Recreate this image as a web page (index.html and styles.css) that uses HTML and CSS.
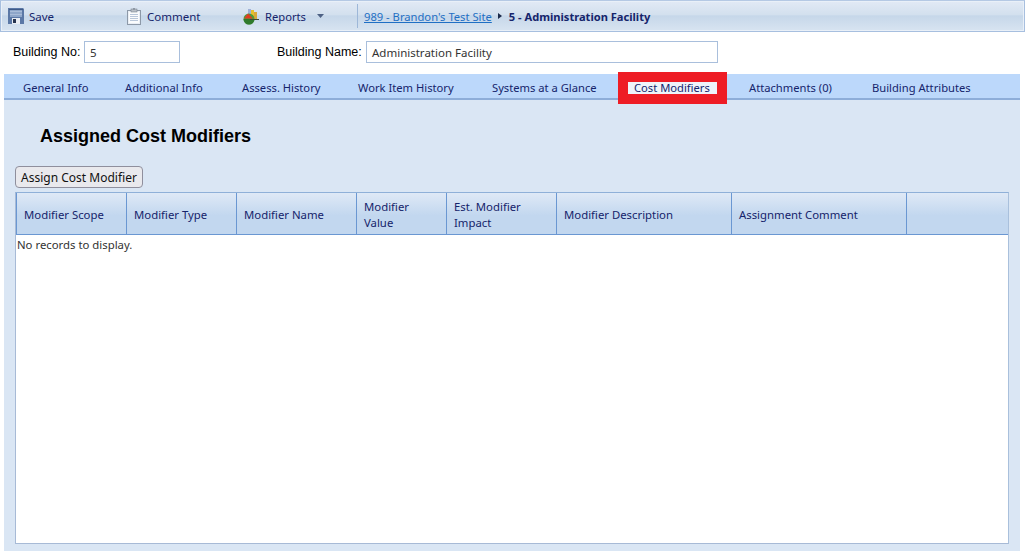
FILE: index.html
```
<!DOCTYPE html>
<html lang="en">
<head>
<meta charset="utf-8">
<title>Administration Facility</title>
<link rel="stylesheet" href="styles.css">
</head>
<body>
<div class="toolbar">
  <div class="tool tool-save">
    <svg class="icon" width="16" height="16" viewBox="0 0 16 16"><path d="M0 0h15l1 1v15H0z" fill="#5b78a6"/><rect x="1" y="1" width="14" height="1" fill="#3f5a88"/><rect x="2" y="2" width="12" height="7" fill="#8ea6c9"/><rect x="2" y="3" width="12" height="1" fill="#a9bcd8"/><rect x="2" y="6" width="12" height="1" fill="#a9bcd8"/><rect x="4" y="10" width="8" height="6" fill="#e9edf3"/><rect x="5" y="11" width="3" height="4" fill="#26344f"/></svg>
    <span>Save</span>
  </div>
  <div class="tool tool-comment">
    <svg class="icon" width="14" height="17" viewBox="0 0 14 17"><rect x="0.5" y="2.5" width="13" height="14" fill="#e9eef5" stroke="#8d99a8"/><rect x="2" y="4" width="10" height="11" fill="#fbfcfd"/><path d="M3 6.500h8M3 8.500h8M3 10.500h8M3 12.500h8" stroke="#b9c7da"/><rect x="4" y="1" width="6" height="3" fill="#b8bec6" stroke="#7b8592" stroke-width=".6"/><rect x="6" y="0" width="2" height="2" fill="#8f98a4"/></svg>
    <span>Comment</span>
  </div>
  <div class="tool tool-reports">
    <svg class="icon" width="17" height="17" viewBox="0 0 17 17"><rect x="5" y="1" width="3" height="8" fill="#9fb0d8"/><rect x="8" y="2" width="3" height="8" fill="#e8c02c"/><rect x="11" y="4" width="3" height="7" fill="#d9a83a"/><circle cx="6" cy="11" r="5.500" fill="#4f9a3b"/><path d="M.5 11h11a5.500 5.500 0 0 1-11 0z" fill="#2f7a2c"/><path d="M1 10.500l4-5 5 5z" fill="#e23b22"/><path d="M7 11.500h9" stroke="#3d4a3a"/></svg>
    <span>Reports</span>
    <svg class="caret" width="7" height="4" viewBox="0 0 7 4"><path d="M0 0h7L3.500 4z" fill="#4d6184"/></svg>
  </div>
  <div class="crumbs">
    <a class="crumb-link" href="#">989 - Brandon's Test Site</a>
    <span class="crumb-arrow"></span>
    <span class="crumb-current">5 - Administration Facility</span>
  </div>
</div>

<div class="form-row">
  <label class="field-label label-no">Building No:</label>
  <div class="field field-no">5</div>
  <label class="field-label label-name">Building Name:</label>
  <div class="field field-name">Administration Facility</div>
</div>

<div class="tabs">
  <div class="tab">General Info</div>
  <div class="tab">Additional Info</div>
  <div class="tab">Assess. History</div>
  <div class="tab">Work Item History</div>
  <div class="tab">Systems at a Glance</div>
  <div class="tab tab-current"><span class="tab-active">Cost Modifiers</span></div>
  <div class="tab">Attachments (0)</div>
  <div class="tab">Building Attributes</div>
</div>

<main class="panel">
  <h1 class="title">Assigned Cost Modifiers</h1>
  <button class="btn" type="button">Assign Cost Modifier</button>
  <div class="grid">
    <div class="grid-head">
      <div class="th">Modifier Scope</div>
      <div class="th">Modifier Type</div>
      <div class="th">Modifier Name</div>
      <div class="th">Modifier<br>Value</div>
      <div class="th">Est. Modifier<br>Impact</div>
      <div class="th">Modifier Description</div>
      <div class="th">Assignment Comment</div>
      <div class="th th-last"></div>
    </div>
    <div class="grid-body">No records to display.</div>
  </div>
</main>
</body>
</html>
```
FILE: styles.css
```
* { box-sizing: border-box; }
html, body { height: 100%; }
body {
  margin: 0;
  width: 1025px;
  height: 551px;
  overflow: hidden;
  background: #fff;
  font-family: "Noto Sans", "Open Sans", sans-serif;
  font-size: 11.5px;
  color: #15246b;
  display: flex;
  flex-direction: column;
}
.toolbar {
  height: 32px;
  flex: none;
  display: flex;
  align-items: center;
  border: 1px solid #a7bfdf;
  border-top-color: #b5c9e4;
  box-shadow: inset 0 0 0 1px #e9f0f8;
  background: linear-gradient(#e2eaf5 0, #d3e0ee 45%, #c6d7e9 50%, #d8e4f1 100%);
  padding-left: 7px;
  color: #15246b;
}
.tool { display: flex; align-items: center; }
.tool-save { width: 119px; gap: 5px; }
.tool-comment { width: 116px; gap: 6px; }
.tool-reports { width: 114px; gap: 5px; font-size: 11.2px; }
.caret { margin-left: 6px; }
.icon { flex: none; }
.crumbs {
  height: 24px;
  border-left: 1px solid #9db7d8;
  padding-left: 6px;
  display: flex;
  align-items: center;
  gap: 6px;
  font-size: 11.2px;
}
.crumb-link { color: #1f6fc4; text-decoration: underline; }
.crumb-arrow {
  width: 0;
  height: 0;
  margin-right: 1px;
  border-left: 4px solid #1b2a4a;
  border-top: 3px solid transparent;
  border-bottom: 3px solid transparent;
}
.crumb-current { font-weight: 700; font-size: 11.1px; color: #15246b; }
.form-row {
  height: 42px;
  flex: none;
  display: flex;
  align-items: center;
  padding: 0 0 2px 13px;
}
.field-label {
  font-family: "Liberation Sans", Arial, sans-serif;
  font-size: 12.5px;
  color: #000;
}
.label-no { width: 71px; }
.label-name { width: 89px; }
.field {
  height: 22px;
  border: 1px solid #a9bfdc;
  background: #fff;
  color: #333;
  padding: 3px 5px 0;
  line-height: 16px;
}
.field-no { width: 96px; margin-right: 97px; }
.field-name { width: 352px; }
.tabs {
  height: 26px;
  flex: none;
  margin: 0 5px 0 4px;
  display: grid;
  grid-template-columns: 102px 117px 116px 134px 142px 115px 123px 1fr;
  align-items: center;
  background: #bcd8fb;
  border-bottom: 2px solid #8dadd9;
  padding-top: 4px;
  font-size: 11.2px;
}
.tab { padding: 0 0 0 19px; color: #15246b; white-space: nowrap; line-height: 14px; }
.tab-current { padding-left: 13px; }
.tab-active {
  display: block;
  width: 89px;
  height: 12px;
  line-height: 12px;
  padding: 0 6px;
  background: #eef3fa;
  box-shadow: 0 0 0 10px #ee1c25;
  position: relative;
  white-space: nowrap;
}
.panel {
  flex: 1;
  margin: 0 5px 0 4px;
  background: #dae6f4;
  padding: 0 11px 7px 11px;
  display: flex;
  flex-direction: column;
  align-items: flex-start;
}
.title {
  margin: 25px 0 0 25px;
  font-family: "Liberation Sans", Arial, sans-serif;
  font-size: 18px;
  line-height: 22px;
  font-weight: 700;
  color: #000;
}
.btn {
  margin-top: 19px;
  width: 128px;
  height: 22px;
  padding: 0;
  border: 1px solid #8f8f9d;
  border-radius: 4px;
  background: #e9e9ed;
  font: inherit;
  font-size: 12px;
  color: #111;
  white-space: nowrap;
}
.grid {
  margin-top: 4px;
  width: 994px;
  flex: 1;
  display: flex;
  flex-direction: column;
  border: 1px solid #a7bad6;
  border-top-color: #8fb0d8;
  border-right-color: #a9c0dc;
  background: #fff;
  font-size: 11.35px;
}
.grid-head {
  height: 42px;
  flex: none;
  display: grid;
  grid-template-columns: 111px 110px 120px 90px 110px 175px 175px 1fr;
  background: linear-gradient(#dfe9f6 0, #c2d7ef 55%, #c2d7ef 100%);
  border-bottom: 1px solid #6a97d2;
}
.th {
  display: flex;
  align-items: center;
  padding: 2px 7px 0;
  line-height: 16px;
  border-right: 1px solid #6a97d2;
  color: #15246b;
}
.th:first-child { border-left: 1px solid #6a97d2; }
.th-last { border-right: 0; }
.grid-body { padding: 2px 1px; line-height: 16px; color: #333; }
```
